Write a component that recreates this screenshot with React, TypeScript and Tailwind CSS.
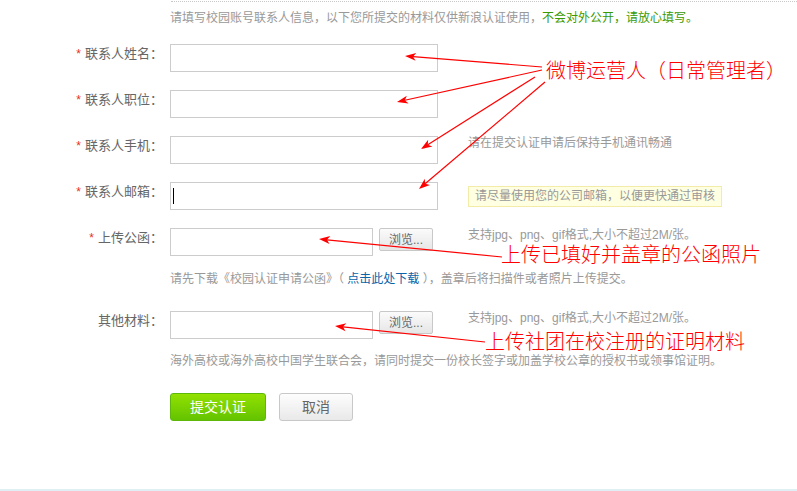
import React from "react";

const FONT = "font-['Liberation_Sans','Noto_Sans_CJK_SC',sans-serif]";

type Pt = [number, number];

function Arrow({ s, t }: { s: Pt; t: Pt }) {
  const dx = t[0] - s[0];
  const dy = t[1] - s[1];
  const len = Math.hypot(dx, dy);
  const ux = dx / len;
  const uy = dy / len;
  const nx = -uy;
  const ny = ux;
  const bx = t[0] - ux * 11;
  const by = t[1] - uy * 11;
  const mx = t[0] - ux * 8;
  const my = t[1] - uy * 8;
  const pts = [
    [t[0], t[1]],
    [bx + nx * 4, by + ny * 4],
    [mx, my],
    [bx - nx * 4, by - ny * 4],
  ]
    .map((p) => p.join(","))
    .join(" ");
  return (
    <g>
      <line x1={s[0]} y1={s[1]} x2={mx} y2={my} stroke="#ff0000" strokeWidth={1.2} />
      <polygon points={pts} fill="#ff0000" />
    </g>
  );
}

function Label({ text, req = true }: { text: string; req?: boolean }) {
  return (
    <div className="w-[163px] shrink-0 text-right text-[13px] leading-[20px] text-[#666]">
      {req && <span className="mr-[4px] text-[12px] text-[#e8311a]">*</span>}
      {text}
    </div>
  );
}

function BrowseBtn() {
  return (
    <div className="ml-[6px] flex h-[23px] w-[54px] shrink-0 items-center justify-center rounded-[2px] border border-[#c8c8c8] bg-gradient-to-b from-[#fbfbfb] to-[#e6e6e6] text-[12px] text-[#666]">
      浏览...
    </div>
  );
}

export default function App() {
  return (
    <div className={`relative h-[491px] w-[797px] overflow-hidden bg-white ${FONT}`}>
      <div className="flex h-full flex-col">
        <div className="pl-[171px] pt-[1px]">
          <div className="border-t border-dotted border-[#c8c8c8]" />
        </div>
        <div className="ml-[170px] mt-[6px] text-[12px] leading-[20px] text-[#999]">
          请填写校园账号联系人信息，以下您所提交的材料仅供新浪认证使用，
          <span className="text-[#3a9a00]">不会对外公开，请放心填写。</span>
        </div>

        {/* row 1 */}
        <div className="mt-[16px] flex h-[28px] items-start">
          <Label text="联系人姓名：" />
          <div className="ml-[7px] h-[28px] w-[268px] border border-[#cccccc]" />
        </div>
        {/* row 2 */}
        <div className="mt-[18px] flex h-[28px] items-start">
          <Label text="联系人职位：" />
          <div className="ml-[7px] h-[28px] w-[268px] border border-[#cccccc]" />
        </div>
        {/* row 3 */}
        <div className="mt-[18px] flex h-[28px] items-start">
          <Label text="联系人手机：" />
          <div className="ml-[7px] h-[28px] w-[268px] border border-[#cccccc]" />
          <div className="ml-[30px] text-[12px] leading-[14px] text-[#999]">
            请在提交认证申请后保持手机通讯畅通
          </div>
        </div>
        {/* row 4 */}
        <div className="mt-[18px] flex h-[28px] items-start">
          <Label text="联系人邮箱：" />
          <div className="ml-[7px] flex h-[28px] w-[268px] items-center border border-[#cccccc] pl-[2px]">
            <div className="h-[16px] w-[1px] bg-black" />
          </div>
          <div className="ml-[30px] mt-[4px] h-[21px] w-[254px] border border-[#f3eca8] bg-[#ffffe2] pl-[6px] text-[12px] leading-[19px] text-[#999]">
            请尽量使用您的公司邮箱，以便更快通过审核
          </div>
        </div>
        {/* row 5 */}
        <div className="mt-[18px] flex h-[28px] items-start">
          <Label text="上传公函：" />
          <div className="ml-[7px] h-[28px] w-[203px] border border-[#cccccc]" />
          <BrowseBtn />
          <div className="ml-[35px] text-[12px] leading-[14px] text-[#999]">
            支持jpg、png、gif格式,大小不超过2M/张。
          </div>
        </div>
        <div className="ml-[170px] mt-[13px] text-[12px] leading-[20px] text-[#999]">
          请先下载《校园认证申请公函》（ <span className="text-[#0b63a8]">点击此处下载</span> ），盖章后将扫描件或者照片上传提交。
        </div>
        {/* row 6 */}
        <div className="mt-[22px] flex h-[28px] items-start">
          <Label text="其他材料：" req={false} />
          <div className="ml-[7px] h-[28px] w-[203px] border border-[#cccccc]" />
          <BrowseBtn />
          <div className="ml-[35px] text-[12px] leading-[14px] text-[#999]">
            支持jpg、png、gif格式,大小不超过2M/张。
          </div>
        </div>
        <div className="ml-[170px] mt-[12px] text-[12px] leading-[20px] text-[#999]">
          海外高校或海外高校中国学生联合会，请同时提交一份校长签字或加盖学校公章的授权书或领事馆证明。
        </div>
        {/* buttons */}
        <div className="ml-[170px] mt-[22px] flex gap-[13px]">
          <div className="flex h-[28px] w-[96px] items-center justify-center rounded-[3px] border border-[#5db80a] bg-gradient-to-b from-[#92e100] to-[#63c300] text-[14px] text-white">
            提交认证
          </div>
          <div className="flex h-[28px] w-[74px] items-center justify-center rounded-[3px] border border-[#c8c8c8] bg-gradient-to-b from-[#fdfdfd] to-[#e9e9e9] text-[14px] text-[#666]">
            取消
          </div>
        </div>
        <div className="mt-auto h-[2px] bg-[#e0eff3]" />
      </div>

      {/* annotations */}
      <svg className="pointer-events-none absolute left-0 top-0" width={797} height={491}>
        <Arrow s={[542, 67]} t={[405, 56]} />
        <Arrow s={[542, 70]} t={[397, 102]} />
        <Arrow s={[535, 77]} t={[421, 149]} />
        <Arrow s={[545, 82]} t={[419, 189]} />
        <Arrow s={[502, 257]} t={[319, 239]} />
        <Arrow s={[485, 342]} t={[335, 326]} />
      </svg>
      <div className="absolute left-[546px] top-[61px] text-[20px] font-light leading-[20px] text-[#ff0000]">
        微博运营人（日常管理者）
      </div>
      <div className="absolute left-[501px] top-[245px] text-[20px] font-light leading-[20px] text-[#ff0000]">
        上传已填好并盖章的公函照片
      </div>
      <div className="absolute left-[485px] top-[332px] text-[20px] font-light leading-[20px] text-[#ff0000]">
        上传社团在校注册的证明材料
      </div>
    </div>
  );
}
